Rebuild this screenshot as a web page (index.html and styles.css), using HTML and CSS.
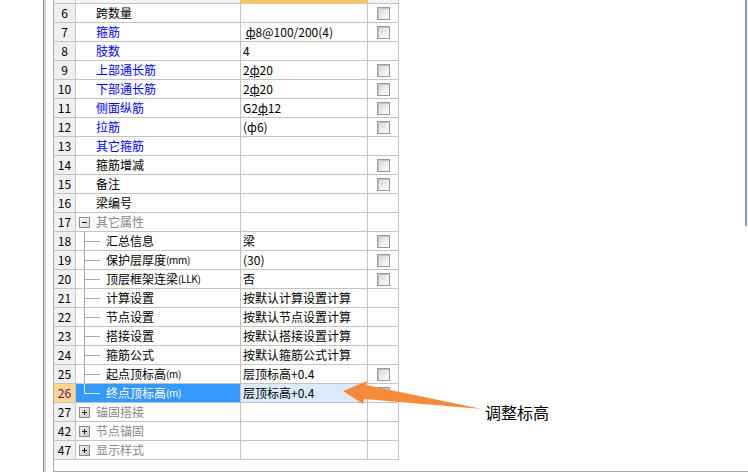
FILE: index.html
```html
<!DOCTYPE html>
<html lang="zh">
<head>
<meta charset="utf-8">
<title>属性编辑</title>
<link rel="stylesheet" href="styles.css">
</head>
<body>
<div class="page">
  <div class="gutter"></div>
  <div class="frame">
    <div class="panel">
      <div class="grid">
        <div class="row head"><div class="num"></div><div class="name"></div><div class="val sel"></div><div class="chk"></div></div>
        <div class="row"><div class="num">6</div><div class="name">跨数量</div><div class="val"></div><div class="chk"><span class="cb"></span></div></div>
        <div class="row"><div class="num">7</div><div class="name blue">箍筋</div><div class="val">&nbsp;<span class="r">ф</span>8@100/200(4)</div><div class="chk"><span class="cb"></span></div></div>
        <div class="row"><div class="num">8</div><div class="name blue">肢数</div><div class="val">4</div><div class="chk"></div></div>
        <div class="row"><div class="num">9</div><div class="name blue">上部通长筋</div><div class="val">2<span class="r">ф</span>20</div><div class="chk"><span class="cb"></span></div></div>
        <div class="row"><div class="num">10</div><div class="name blue">下部通长筋</div><div class="val">2<span class="r">ф</span>20</div><div class="chk"><span class="cb"></span></div></div>
        <div class="row"><div class="num">11</div><div class="name blue">侧面纵筋</div><div class="val">G2<span class="r">ф</span>12</div><div class="chk"><span class="cb"></span></div></div>
        <div class="row"><div class="num">12</div><div class="name blue">拉筋</div><div class="val">(ф6)</div><div class="chk"><span class="cb"></span></div></div>
        <div class="row"><div class="num">13</div><div class="name blue">其它箍筋</div><div class="val"></div><div class="chk"></div></div>
        <div class="row"><div class="num">14</div><div class="name">箍筋增减</div><div class="val"></div><div class="chk"><span class="cb"></span></div></div>
        <div class="row"><div class="num">15</div><div class="name">备注</div><div class="val"></div><div class="chk"><span class="cb"></span></div></div>
        <div class="row"><div class="num">16</div><div class="name">梁编号</div><div class="val"></div><div class="chk"></div></div>
        <div class="row"><div class="num">17</div><div class="name group"><span class="box minus"></span>其它属性</div><div class="val"></div><div class="chk"></div></div>
        <div class="row"><div class="num">18</div><div class="name tree"><span class="branch"></span>汇总信息</div><div class="val">梁</div><div class="chk"><span class="cb"></span></div></div>
        <div class="row"><div class="num">19</div><div class="name tree"><span class="branch"></span>保护层厚度<span class="unit">(mm)</span></div><div class="val">(30)</div><div class="chk"><span class="cb"></span></div></div>
        <div class="row"><div class="num">20</div><div class="name tree"><span class="branch"></span>顶层框架连梁<span class="unit">(LLK)</span></div><div class="val">否</div><div class="chk"><span class="cb"></span></div></div>
        <div class="row"><div class="num">21</div><div class="name tree"><span class="branch"></span>计算设置</div><div class="val">按默认计算设置计算</div><div class="chk"></div></div>
        <div class="row"><div class="num">22</div><div class="name tree"><span class="branch"></span>节点设置</div><div class="val">按默认节点设置计算</div><div class="chk"></div></div>
        <div class="row"><div class="num">23</div><div class="name tree"><span class="branch"></span>搭接设置</div><div class="val">按默认搭接设置计算</div><div class="chk"></div></div>
        <div class="row"><div class="num">24</div><div class="name tree"><span class="branch"></span>箍筋公式</div><div class="val">按默认箍筋公式计算</div><div class="chk"></div></div>
        <div class="row"><div class="num">25</div><div class="name tree"><span class="branch"></span>起点顶标高<span class="unit">(m)</span></div><div class="val">层顶标高+0.4</div><div class="chk"><span class="cb"></span></div></div>
        <div class="row current"><div class="num">26</div><div class="name tree"><span class="branch last"></span>终点顶标高<span class="unit">(m)</span></div><div class="val">层顶标高+0.4</div><div class="chk"><span class="cb"></span></div></div>
        <div class="row"><div class="num">27</div><div class="name group"><span class="box plus"></span>锚固搭接</div><div class="val"></div><div class="chk"></div></div>
        <div class="row"><div class="num">42</div><div class="name group"><span class="box plus"></span>节点锚固</div><div class="val"></div><div class="chk"></div></div>
        <div class="row"><div class="num">47</div><div class="name group"><span class="box plus"></span>显示样式</div><div class="val"></div><div class="chk"></div></div>
      </div>
      <div class="edge"></div>
    </div>
  </div>
  <svg class="callout" width="748" height="472" viewBox="0 0 748 472">
    <polygon points="343,391 367,381 366,385 482,409 364,399 363,404" fill="#f68a3b"/>
  </svg>
  <div class="note">调整标高</div>
</div>
</body>
</html>
```

FILE: styles.css
```css
* { box-sizing: border-box; }
html, body { margin: 0; padding: 0; background: #fff; }
body {
  font-family: "Noto Sans CJK SC", "DejaVu Sans", sans-serif;
  font-size: 12px;
  color: #000;
}
.page {
  position: relative;
  width: 748px;
  height: 472px;
  overflow: hidden;
  display: flex;
}
.gutter { width: 43px; flex: none; }
.frame {
  flex: 1;
  border-left: 1px solid #8e8e8e;
  box-shadow: inset 2px 0 0 #d2d2d2;
  padding-left: 9px;
}
.panel {
  height: 472px;
  border-left: 1px solid #a6a6a6;
  border-bottom: 1px solid #a6a6a6;
  display: flex;
  justify-content: space-between;
  align-items: flex-start;
}
.edge {
  width: 2px;
  height: 226px;
  margin-right: 1px;
  background: #8f9db3;
}
.grid { display: flex; flex-direction: column; }
.row {
  display: grid;
  grid-template-columns: 22px 165px 127px 31px;
  height: 19px;
}
.row > div {
  border-right: 1px solid #c3c3c3;
  border-bottom: 1px solid #c3c3c3;
  line-height: 18px;
  white-space: nowrap;
  overflow: hidden;
  display: flex;
  align-items: center;
}
.row.head { height: 4px; }
.row.head > div { background: #f4f4f4; }
.row.head > .val.sel { background: #f6c46a; border-bottom-color: #f6c46a; }
.num {
  justify-content: center;
  background: #f0f0f0;
  font-size: 12px;
}
.name { padding-left: 20px; }
.name.blue { color: #0000ff; }
.name.group { padding-left: 3px; color: #888; }
.name.tree { padding-left: 8px; }
.val { padding-left: 2px; }
.unit { font-size: 10px; letter-spacing: -0.3px; }
.r {
  text-decoration: underline;
  text-underline-offset: 1px;
}
.branch {
  width: 22px;
  height: 18px;
  flex: none;
  background:
    linear-gradient(#a8a8a8, #a8a8a8) 0 0 / 1px 100% no-repeat,
    linear-gradient(#a8a8a8, #a8a8a8) 0 9px / 16px 1px no-repeat;
}
.branch.last {
  background:
    linear-gradient(#e6eefa, #e6eefa) 0 0 / 1px 10px no-repeat,
    linear-gradient(#e6eefa, #e6eefa) 0 9px / 16px 1px no-repeat;
}
.box {
  width: 11px;
  height: 11px;
  flex: none;
  margin-right: 6px;
  border: 1px solid #8a8a8a;
  background:
    linear-gradient(#1a1a1a, #1a1a1a) center / 5px 1px no-repeat,
    linear-gradient(135deg, #ffffff, #d6d6d6);
}
.box.plus {
  background:
    linear-gradient(#1a1a1a, #1a1a1a) center / 5px 1px no-repeat,
    linear-gradient(#1a1a1a, #1a1a1a) center / 1px 5px no-repeat,
    linear-gradient(135deg, #f2f2f2, #c8c8c8);
}
.chk { justify-content: flex-start; }
.cb {
  width: 13px;
  height: 13px;
  margin-left: 9px;
  border: 1px solid #9a9a9a;
  background: linear-gradient(135deg, #d4d4d4, #f7f7f7 80%);
  box-shadow: inset 1px 1px 0 #c4c4c4;
}
.row.current .num { background: #ffd68f; color: #6b136b; }
.row.current .name { background: #3399ff; color: #fff; }
.row.current .val { background: #dcebfb; }
.callout {
  position: absolute;
  left: 0;
  top: 0;
  pointer-events: none;
}
.note {
  position: absolute;
  left: 485px;
  top: 402px;
  font-size: 16px;
  line-height: 20px;
  color: #000;
}
```
